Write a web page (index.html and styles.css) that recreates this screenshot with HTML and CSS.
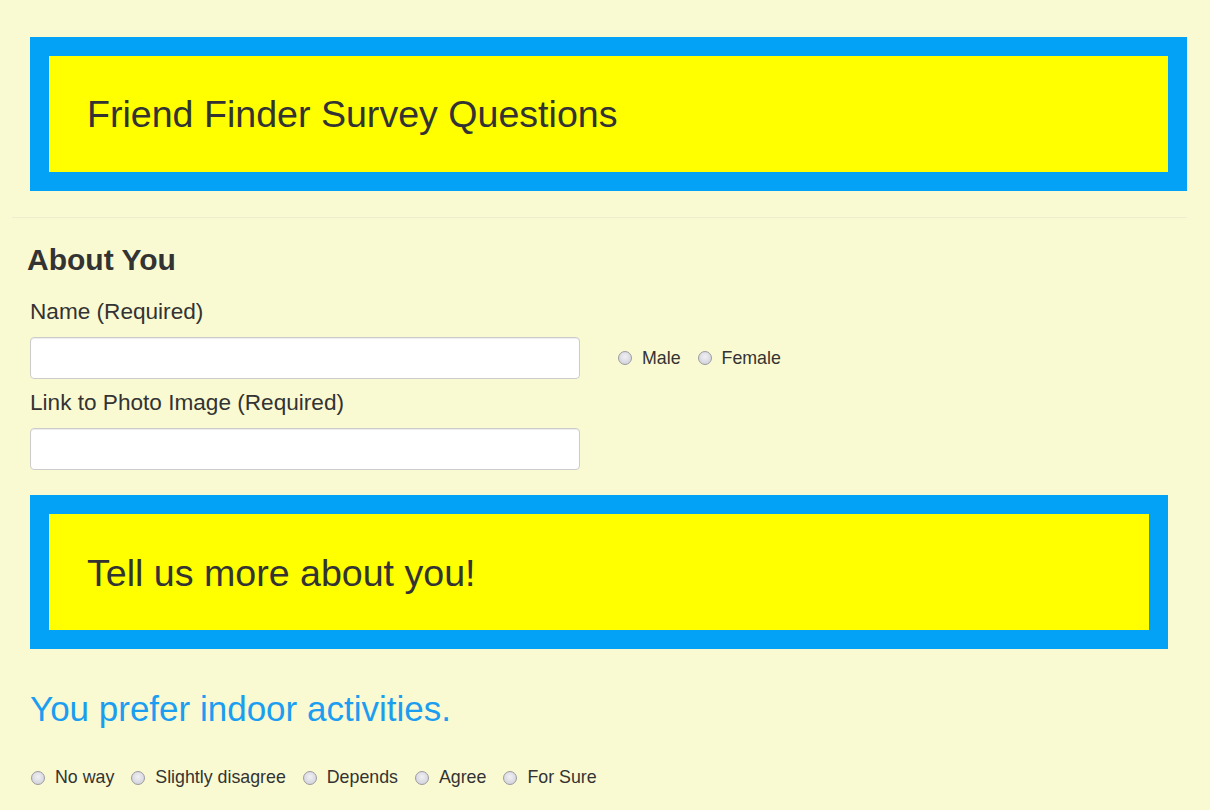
FILE: index.html
```html
<!DOCTYPE html>
<html lang="en">
<head>
<meta charset="utf-8">
<title>Friend Finder Survey</title>
<link rel="stylesheet" href="styles.css">
</head>
<body>
<div class="page">
  <header class="banner banner-top">
    <h1 class="banner-title">Friend Finder Survey Questions</h1>
  </header>
  <hr class="rule">
  <section class="survey">
    <h2 class="section-title">About You</h2>
    <div class="fields">
      <div class="about-grid">
        <label class="field-label label-name" for="name">Name (Required)</label>
        <span></span>
        <input class="text-input" id="name" type="text">
        <div class="gender">
          <label class="choice"><input type="radio" name="gender"><span>Male</span></label>
          <label class="choice"><input type="radio" name="gender"><span>Female</span></label>
        </div>
        <label class="field-label label-photo" for="photo">Link to Photo Image (Required)</label>
        <span></span>
        <input class="text-input input-photo" id="photo" type="text">
        <span></span>
      </div>
      <div class="banner banner-more">
        <h1 class="banner-title">Tell us more about you!</h1>
      </div>
      <h3 class="question">You prefer indoor activities.</h3>
      <div class="answers">
        <label class="choice"><input type="radio" name="q1"><span>No way</span></label>
        <label class="choice"><input type="radio" name="q1"><span>Slightly disagree</span></label>
        <label class="choice"><input type="radio" name="q1"><span>Depends</span></label>
        <label class="choice"><input type="radio" name="q1"><span>Agree</span></label>
        <label class="choice"><input type="radio" name="q1"><span>For Sure</span></label>
      </div>
    </div>
  </section>
</div>
</body>
</html>
```
FILE: styles.css
```css
html, body {
  margin: 0;
  padding: 0;
  background: #fafad2;
}
body {
  font-family: "Liberation Sans", Arial, sans-serif;
  color: #333333;
  height: 810px;
  overflow: hidden;
}
.page {
  padding: 37px 23px 0 12px;
}
.banner {
  border: 19px solid #03a2f7;
  background: #ffff00;
  height: 116px;
  box-sizing: content-box;
  padding: 0 38px;
}
.banner-top {
  margin-left: 18px;
}
.banner-title {
  margin: 0;
  font-size: 37.6px;
  font-weight: normal;
  line-height: 40px;
  color: #333333;
}
.banner-top .banner-title {
  padding-top: 38px;
}
.banner-more .banner-title {
  padding-top: 39px;
}
.rule {
  margin: 26px 0 0 0;
  border: 0;
  border-top: 1px solid #efedd0;
  height: 0;
}
.survey {
  padding-left: 15px;
}
.section-title {
  margin: 25px 0 0 0;
  font-size: 30px;
  font-weight: bold;
  line-height: 33px;
}
.fields {
  padding-left: 3px;
  margin-right: 19px;
}
.about-grid {
  display: grid;
  grid-template-columns: 550px auto;
  column-gap: 38px;
  align-items: center;
}
.field-label {
  font-size: 22.6px;
  line-height: 30px;
  display: block;
}
.label-name {
  margin-top: 21px;
  margin-bottom: 10px;
}
.label-photo {
  margin-top: 9px;
  margin-bottom: 10px;
}
.text-input {
  box-sizing: border-box;
  width: 550px;
  height: 42px;
  margin: 0;
  border: 1px solid #cccccc;
  border-radius: 4px;
  background: #ffffff;
  box-shadow: inset 0 1px 1px rgba(0,0,0,0.075);
  font-size: 16px;
  padding: 6px 12px;
}
.gender {
  display: flex;
  gap: 17px;
}
.choice {
  display: inline-flex;
  align-items: center;
  gap: 10px;
  font-size: 17.8px;
  line-height: 25px;
  color: #333333;
}
.choice input {
  appearance: none;
  -webkit-appearance: none;
  width: 14px;
  height: 14px;
  margin: 0;
  border-radius: 50%;
  border: 1px solid #9c9ca2;
  background: radial-gradient(circle at 50% 40%, #f0f0f4 0%, #dadae2 60%, #cbcbd4 100%);
  box-sizing: border-box;
  flex: none;
}
.banner-more {
  margin-top: 25px;
}
.question {
  margin: 41px 0 0 0;
  font-size: 35px;
  font-weight: normal;
  line-height: 38px;
  color: #1c9df0;
}
.answers {
  display: flex;
  gap: 17px;
  margin-top: 37px;
  padding-left: 1px;
}
```
